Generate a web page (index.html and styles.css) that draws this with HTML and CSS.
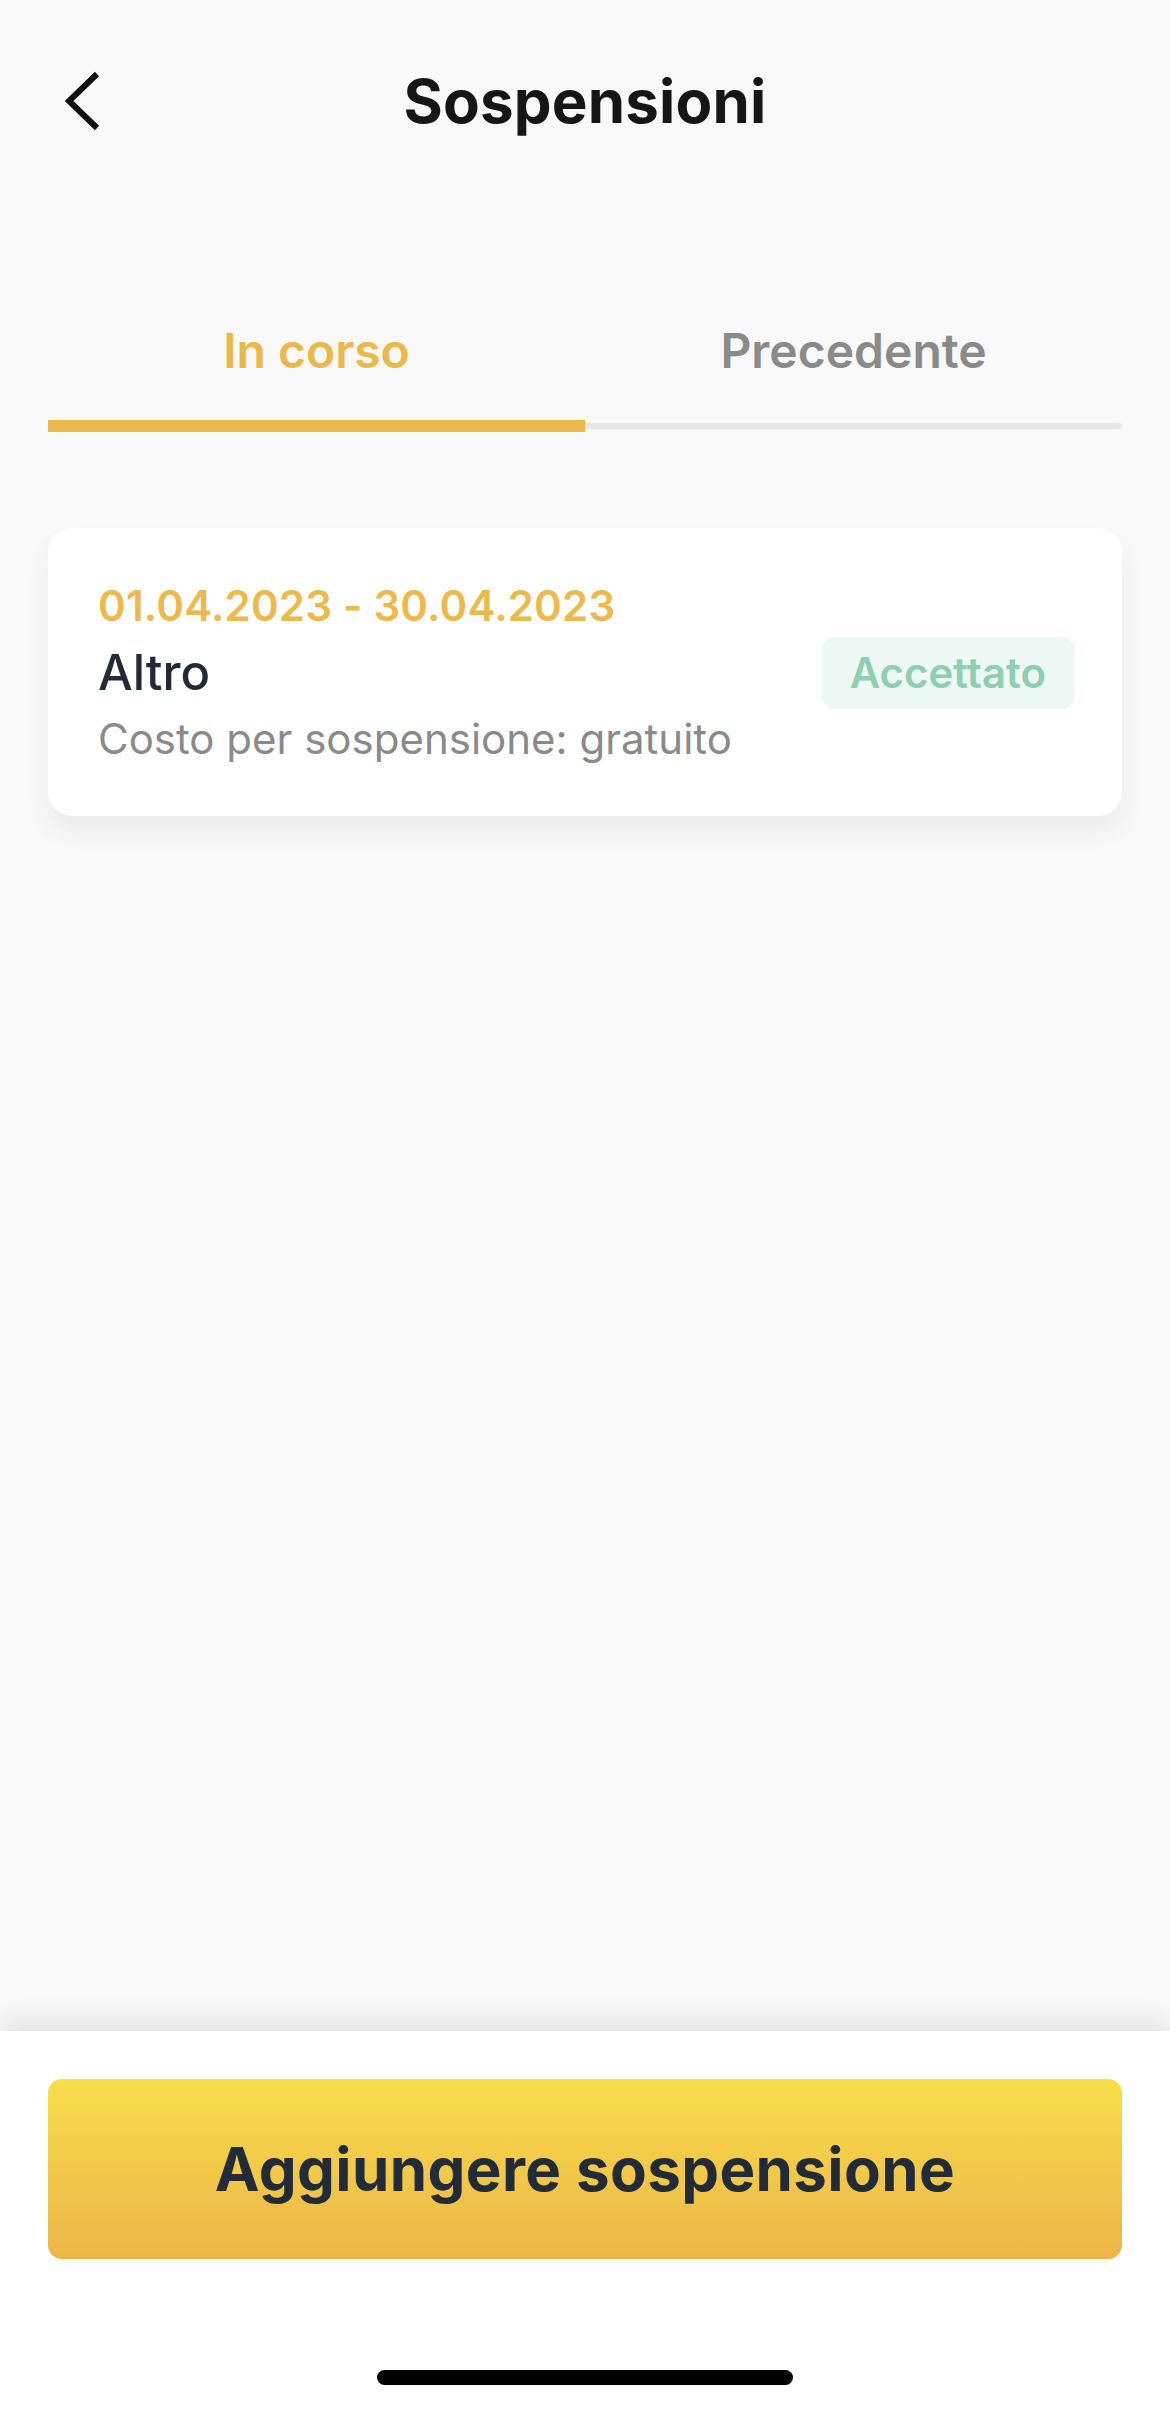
FILE: index.html
```html
<!DOCTYPE html>
<html lang="it">
<head>
<meta charset="utf-8">
<title>Sospensioni</title>
<link rel="stylesheet" href="styles.css">
</head>
<body>
<div class="screen">
  <header class="topbar">
    <button class="back" aria-label="Indietro">
      <svg width="40" height="64" viewBox="0 0 40 64" aria-hidden="true">
        <polyline points="32,5 4,32 32,59" fill="none" stroke="#111111" stroke-width="6" stroke-linejoin="miter" stroke-linecap="butt"/>
      </svg>
    </button>
    <h1 class="title">Sospensioni</h1>
    <span class="spacer"></span>
  </header>

  <nav class="tabs">
    <div class="tab-labels">
      <span class="tab tab-active">In corso</span>
      <span class="tab">Precedente</span>
    </div>
    <div class="tab-track">
      <span class="seg seg-active"></span>
      <span class="seg seg-rest"></span>
    </div>
  </nav>

  <main class="list">
    <article class="card">
      <div class="card-text">
        <p class="dates">01.04.2023 - 30.04.2023</p>
        <p class="reason">Altro</p>
        <p class="cost">Costo per sospensione: gratuito</p>
      </div>
      <span class="badge">Accettato</span>
    </article>
  </main>

  <footer class="bottom">
    <button class="cta">Aggiungere sospensione</button>
    <span class="home-indicator"></span>
  </footer>
</div>
</body>
</html>
```

FILE: styles.css
```css
* {
  box-sizing: border-box;
}

html, body {
  margin: 0;
  padding: 0;
  background: #f8f8f8;
}

body {
  font-family: Inter, "Noto Sans", "Liberation Sans", sans-serif;
}

.screen {
  width: 1170px;
  height: 2409px;
  display: flex;
  flex-direction: column;
  background: #f8f8f8;
  overflow: hidden;
}

/* Header */
.topbar {
  display: grid;
  grid-template-columns: 1fr auto 1fr;
  align-items: center;
  padding: 66px 48px 0 48px;
  height: 136px;
}

.back {
  justify-self: start;
  width: 40px;
  height: 64px;
  margin-left: 17px;
  padding: 0;
  border: 0;
  background: none;
  display: flex;
  align-items: center;
  justify-content: center;
}

.back svg {
  display: block;
}

.title {
  margin: 0;
  font-size: 60px;
  line-height: 70px;
  font-weight: 700;
  color: #161616;
  letter-spacing: 0.2px;
}

/* Tabs */
.tabs {
  padding: 0 48px;
  margin-top: 186px;
}

.tab-labels {
  display: flex;
}

.tab {
  flex: 1;
  text-align: center;
  font-size: 48px;
  line-height: 58px;
  font-weight: 600;
  color: #8a8a8a;
}

.tab-active {
  color: #ebb84a;
}

.tab-track {
  display: flex;
  align-items: center;
  height: 12px;
  margin-top: 40px;
}

.seg {
  flex: 1;
}

.seg-active {
  height: 12px;
  background: #ebb84a;
}

.seg-rest {
  height: 6px;
  background: #e6e6e6;
  border-radius: 0 3px 3px 0;
}

/* List */
.list {
  flex: 1;
  padding: 96px 48px 0 48px;
}

.card {
  display: flex;
  align-items: center;
  justify-content: space-between;
  background: #ffffff;
  border-radius: 24px;
  padding: 53px 48px 52px 50px;
  box-shadow: 0 16px 26px rgba(0, 0, 0, 0.055);
}

.card-text p {
  margin: 0;
}

.dates {
  font-size: 42px;
  line-height: 50px;
  font-weight: 600;
  color: #edb94b;
  letter-spacing: 0.2px;
}

.reason {
  margin-top: 13px !important;
  font-size: 49px;
  line-height: 58px;
  font-weight: 500;
  color: #222a36;
}

.cost {
  margin-top: 12px !important;
  font-size: 42px;
  line-height: 50px;
  font-weight: 400;
  color: #8a8a8a;
}

.badge {
  display: inline-block;
  height: 72px;
  line-height: 72px;
  padding: 0 28px;
  border-radius: 12px;
  background: #edf7f3;
  color: #8ecfb1;
  font-size: 42px;
  font-weight: 600;
}

/* Bottom */
.bottom {
  height: 378px;
  background: #ffffff;
  display: flex;
  flex-direction: column;
  align-items: center;
  padding: 48px 48px 0 48px;
  box-shadow: 0 -10px 26px rgba(0, 0, 0, 0.09);
}

.cta {
  width: 100%;
  height: 180px;
  border: 0;
  border-radius: 14px;
  background: linear-gradient(180deg, #f8dd4a 0%, #ebb547 100%);
  color: #222b38;
  font-family: Inter, "Noto Sans", "Liberation Sans", sans-serif;
  font-size: 60px;
  font-weight: 700;
  letter-spacing: 0.4px;
}

.home-indicator {
  display: block;
  margin-top: 111px;
  width: 416px;
  height: 15px;
  border-radius: 8px;
  background: #000000;
}
```
